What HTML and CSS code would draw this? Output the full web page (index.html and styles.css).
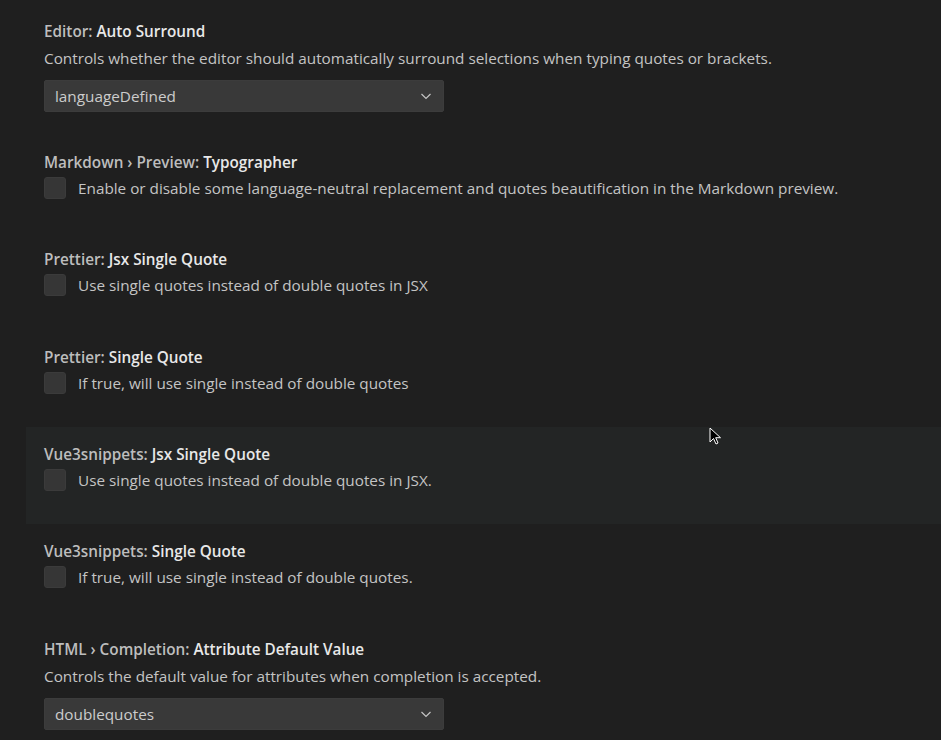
FILE: index.html
```html
<!DOCTYPE html>
<html>
<head>
<meta charset="utf-8">
<link rel="stylesheet" href="styles.css">
</head>
<body>
<div class="list">
  <div class="item item-select">
    <div class="title"><span class="cat">Editor: </span><span class="label">Auto Surround</span></div>
    <div class="desc">Controls whether the editor should automatically surround selections when typing quotes or brackets.</div>
    <div class="select"><span>languageDefined</span><svg class="chev" width="16" height="16" viewBox="0 0 16 16"><path d="M3.5 6 L8 10.5 L12.5 6" fill="none" stroke="#c5c5c5" stroke-width="1.2"/></svg></div>
  </div>
  <div class="item item-check">
    <div class="title"><span class="cat">Markdown › Preview: </span><span class="label">Typographer</span></div>
    <div class="check-row"><span class="box"></span><span class="desc-inline">Enable or disable some language-neutral replacement and quotes beautification in the Markdown preview.</span></div>
  </div>
  <div class="item item-check">
    <div class="title"><span class="cat">Prettier: </span><span class="label">Jsx Single Quote</span></div>
    <div class="check-row"><span class="box"></span><span class="desc-inline">Use single quotes instead of double quotes in JSX</span></div>
  </div>
  <div class="item item-check">
    <div class="title"><span class="cat">Prettier: </span><span class="label">Single Quote</span></div>
    <div class="check-row"><span class="box"></span><span class="desc-inline">If true, will use single instead of double quotes</span></div>
  </div>
  <div class="item item-check hover">
    <div class="title"><span class="cat">Vue3snippets: </span><span class="label">Jsx Single Quote</span></div>
    <div class="check-row"><span class="box"></span><span class="desc-inline">Use single quotes instead of double quotes in JSX.</span></div>
    <svg class="cursor" width="14" height="20" viewBox="0 0 14 20"><path d="M1 1 L1 15 L4.5 11.5 L7 17 L9 16 L6.7 10.7 L11.5 10.7 Z" fill="#000" stroke="#fff" stroke-width="1"/></svg>
  </div>
  <div class="item item-check">
    <div class="title"><span class="cat">Vue3snippets: </span><span class="label">Single Quote</span></div>
    <div class="check-row"><span class="box"></span><span class="desc-inline">If true, will use single instead of double quotes.</span></div>
  </div>
  <div class="item item-select">
    <div class="title"><span class="cat">HTML › Completion: </span><span class="label">Attribute Default Value</span></div>
    <div class="desc">Controls the default value for attributes when completion is accepted.</div>
    <div class="select"><span>doublequotes</span><svg class="chev" width="16" height="16" viewBox="0 0 16 16"><path d="M3.5 6 L8 10.5 L12.5 6" fill="none" stroke="#c5c5c5" stroke-width="1.2"/></svg></div>
  </div>
</div>
</body>
</html>
```
FILE: styles.css
```css
html, body {
  margin: 0;
  padding: 0;
  background: #1f1f1f;
  height: 100%;
  overflow: hidden;
}
body {
  font-family: "Open Sans", "Noto Sans", sans-serif;
  font-size: 15.3px;
  color: #c4c4c4;
}
.list {
  padding-top: 4px;
  padding-left: 26px;
  display: flex;
  flex-direction: column;
}
.item {
  position: relative;
  padding: 17px 18px 0 18px;
  box-sizing: border-box;
}
.item-check { height: 97.33px; }
.item-select { height: 131px; }
.item.hover { background: #232525; }
.title {
  line-height: 20px;
  height: 20px;
  font-weight: 600;
  white-space: nowrap;
}
.cat { color: #bdbdbd; }
.label { color: #e8e8e8; }
.desc {
  margin-top: 7px;
  line-height: 20px;
  white-space: nowrap;
}
.check-row {
  margin-top: 5px;
  display: flex;
  align-items: center;
  gap: 12px;
  height: 22px;
}
.box {
  width: 22px;
  height: 22px;
  box-sizing: border-box;
  flex: none;
  background: #363636;
  border: 1px solid #3b3b3b;
  border-radius: 3px;
}
.desc-inline {
  line-height: 20px;
  white-space: nowrap;
}
.select {
  margin-top: 12px;
  width: 400px;
  height: 32px;
  box-sizing: border-box;
  background: #393939;
  border: 1px solid #3c3c3c;
  border-radius: 2px;
  display: flex;
  align-items: center;
  justify-content: space-between;
  padding: 0 9px 0 10px;
  color: #cccccc;
}
.chev { flex: none; }
.cursor {
  position: absolute;
  left: 683px;
  top: 0px;
}
```
